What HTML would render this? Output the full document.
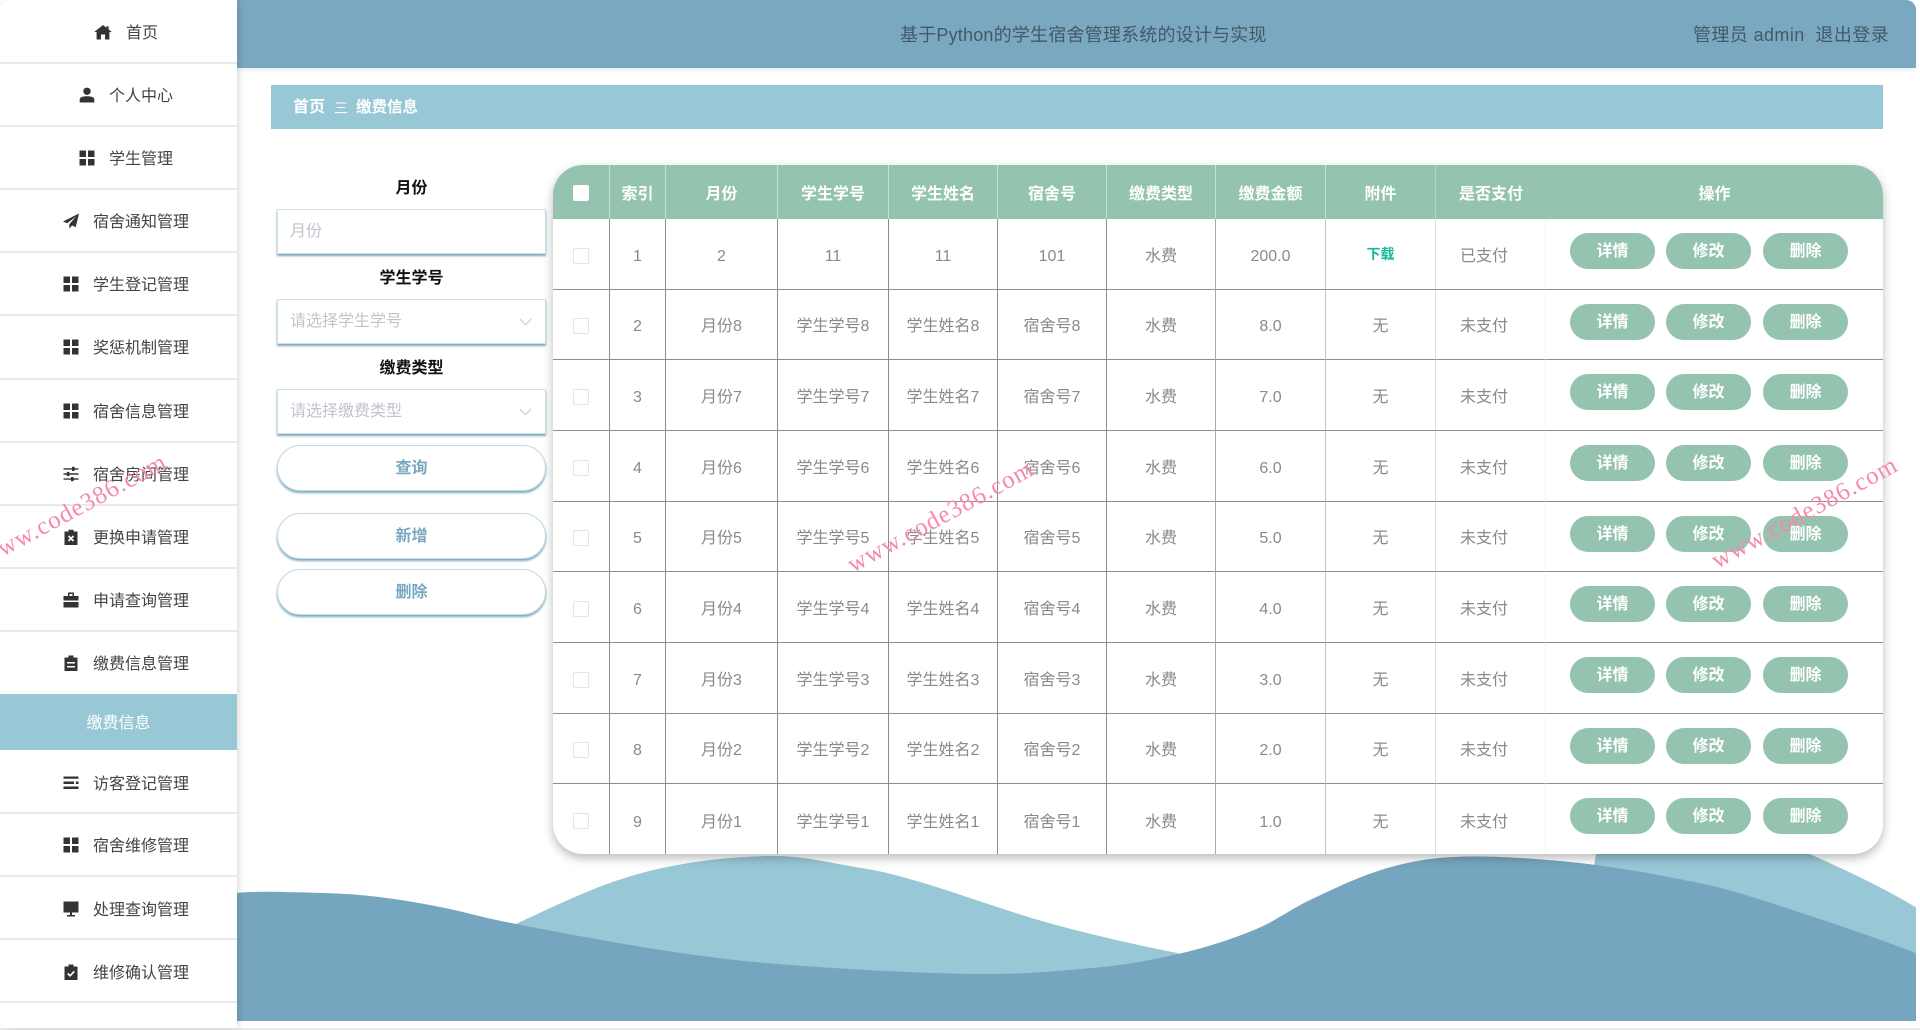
<!DOCTYPE html>
<html lang="zh">
<head>
<meta charset="utf-8">
<title>缴费信息</title>
<style>
html,body{margin:0;padding:0;width:1920px;height:1030px;overflow:hidden;background:#fff;font-family:"Liberation Sans","Noto Sans CJK SC",sans-serif}
#wrap{position:relative;width:1920px;height:1030px;overflow:hidden;background:#fff;filter:blur(.35px)}
.abs{position:absolute}
#botline{position:absolute;left:0;top:1028px;width:1920px;height:2px;background:#ececec}
#sidebar{position:absolute;left:0;top:0;width:237px;height:1028px;background:#fff;overflow:hidden;box-shadow:2px 0 7px rgba(0,0,0,.14);border-radius:10px 0 0 10px;z-index:5}
.it{position:absolute;left:0;width:252px;height:63px;display:flex;align-items:center;justify-content:center;color:#444;font-size:16px;line-height:63px;padding-top:3px;box-sizing:border-box}
.it svg{width:16px;height:16px;margin-right:14px;flex:none;position:relative;top:-1px}
.dv{position:absolute;left:0;width:237px;height:2px;background:#e9e9e9}
#active{position:absolute;left:0;top:694px;width:237px;height:56px;line-height:60px;text-align:center;background:#98c8d6;color:#fff;font-size:16px}
#header{position:absolute;left:237px;top:0;width:1679px;height:68px;background:#7aa8c0;border-radius:0 10px 0 0;box-shadow:0 2px 5px rgba(122,168,192,.2);color:#42596a;font-size:18px}
#title{position:absolute;left:663px;top:22px;line-height:27px;white-space:nowrap;letter-spacing:.2px}
#user{position:absolute;left:1456px;top:22px;line-height:27px;white-space:nowrap;letter-spacing:.4px}
#crumb{position:absolute;left:271px;top:85px;width:1612px;height:44px;background:#98c8d6;color:#fff;font-size:16px;line-height:46px}
#crumb span{position:absolute;top:0;white-space:nowrap}
.lb{position:absolute;left:277px;width:269px;text-align:center;font-size:16px;font-weight:700;color:#111;line-height:24px}
.ip{position:absolute;left:277px;width:269px;height:45px;box-sizing:border-box;background:#fff;border:1px solid #cfe0e8;box-shadow:0 2px 2px #7aa8c0;color:#c0c4cc;font-size:16px;line-height:44px;padding-left:12px}
.ip svg{position:absolute;right:13px;top:18px;width:13px;height:8px}
.fb{position:absolute;left:277px;width:269px;height:46px;box-sizing:border-box;border:1px solid #c6dbe4;border-radius:23px;background:#fff;box-shadow:0 2px 2px #7aa8c0;text-align:center;color:#78a7c0;font-size:16px;font-weight:700;line-height:46px}
#tb{position:absolute;left:553px;top:165px;width:1330px;height:689px;border-radius:30px;background:#fff;overflow:hidden;box-shadow:0 4px 10px rgba(0,0,0,.28)}
table{border-collapse:separate;border-spacing:0;table-layout:fixed;width:1330px;font-size:16px;color:#8a8a8a}
th{height:54px;padding:0;background:#94c3b0;color:#fff;font-weight:700;border-right:1px solid #c4e2d6;text-align:center;box-sizing:border-box}
th:nth-child(9){border-right-color:#b4d6c8}
th:nth-child(10),th:last-child{border-right:0}
td{height:70.67px;padding:6px 0 0;line-height:24px;text-align:center;border-bottom:1px solid #8c8c98;border-right:1px solid #8c8c98;box-sizing:border-box;position:relative}
tr:last-child td{border-bottom:0}
td:nth-child(7){border-right-color:#a8a8b4}
td:nth-child(8){border-right-color:#c4c4d0}
td:nth-child(9){border-right-color:#dcdce2}
td:nth-child(10){border-right-color:#f3f3f5;padding-right:13px}
td:last-child{border-right:0}
.cb{display:inline-block;width:16px;height:16px;box-sizing:border-box;border:1px solid #e4e4e4;border-radius:2px;background:#fff;vertical-align:middle;position:relative;top:-1px}
th .cb{border:0;top:1px}
.dl{color:#14b898;font-size:14px;font-weight:700;position:relative;top:-2px}
.b{position:absolute;top:14px;width:85px;height:36px;border-radius:18px;background:#94c3b0;color:#fff;font-weight:700;line-height:37px;text-align:center}
.b1{left:24px}.b2{left:120px}.b3{left:217px}
#wm{position:absolute;left:0;top:0;z-index:9;pointer-events:none}
#wm text{font-family:"Liberation Serif",serif;font-size:25px;letter-spacing:1px;fill:#f58aab}
</style>
</head>
<body>
<div id="wrap">
<svg class="abs" style="left:0;top:0" width="1920" height="1030" viewBox="0 0 1920 1030">
<defs><clipPath id="c"><rect x="237" y="800" width="1679" height="221"/></clipPath></defs>
<g clip-path="url(#c)">
<path fill="#98c8d6" d="M500 1000L500 940L516 924C531 917 579 894 607 884C635 874 655 869 683 864C711 859 746 856 774 856C802 856 826 862 850 866C874 870 887 872 920 882C953 891.5 1006 911 1049 923C1092 935 1150 948 1178 953L1178 1000Z"/>
<path fill="#98c8d6" d="M1580 950L1596 854L1810 854C1840 868 1880 885 1920 910L1920 1000Z"/>
<path fill="#76a6bf" d="M237 893C245 892 262 891.5 284 892S343 893 370 896S421 903 445 908S480 917 516 924S615 943 661 950S738 961 790 965S924 973.5 974 974S1058 971 1092 968S1151 960 1178 954C1205 948 1232 939 1254 930C1276 921 1290 909.5 1310 900C1330 890.5 1352 880 1372 873C1392 866 1409 862 1430 859C1451 856.3 1474 856 1500 857C1526 858 1559 860.5 1588 864S1649 873 1674 878S1716 886 1739 893S1784 907 1814 917S1905 948 1920 955L1920 1021L237 1021Z"/>
</g>
</svg>
<div id="botline"></div>

<div id="header">
<div id="title">基于Python的学生宿舍管理系统的设计与实现</div>
<div id="user">管理员 admin&nbsp;&nbsp;退出登录</div>
</div>

<div id="crumb">
<span style="left:22px;font-weight:700">首页</span>
<span style="left:63px;font-size:14px">三</span>
<span style="left:85px;font-weight:700;font-size:15.5px">缴费信息</span>
</div>

<div id="sidebar">
<div class="it" style="top:0"><svg viewBox="0 0 16 16" preserveAspectRatio="none" style="width:18px"><path fill="#333" d="M8 1L.2 8H2.3V15.5H6.2V10.5H9.8V15.5H13.7V8H15.8L13 5.5V2.2H11V3.7Z"/></svg>首页</div>
<div class="dv" style="top:62px"></div>
<div class="it" style="top:63px"><svg viewBox="0 0 16 16"><circle cx="8" cy="4.3" r="3.7" fill="#333"/><path fill="#333" d="M.7 15.5V12.6C.7 10.4 3 9.3 8 9.3S15.3 10.4 15.3 12.6V15.5Z"/></svg>个人中心</div>
<div class="dv" style="top:125px"></div>
<div class="it" style="top:126px"><svg viewBox="0 0 16 16"><path fill="#333" d="M.5.5h6.5v6.5H.5zM9 .5h6.5v6.5H9zM.5 9h6.5v6.5H.5zM9 9h6.5v6.5H9z"/></svg>学生管理</div>
<div class="dv" style="top:188px"></div>
<div class="it" style="top:189px"><svg viewBox="0 0 16 16"><path fill="#333" d="M16 .5L0 8.5l4.2 1.8L13 3.5 6.3 11.2v4.3l2.8-3 3.6 1.8z"/></svg>宿舍通知管理</div>
<div class="dv" style="top:251px"></div>
<div class="it" style="top:252px"><svg viewBox="0 0 16 16"><path fill="#333" d="M.5.5h6.5v6.5H.5zM9 .5h6.5v6.5H9zM.5 9h6.5v6.5H.5zM9 9h6.5v6.5H9z"/></svg>学生登记管理</div>
<div class="dv" style="top:314px"></div>
<div class="it" style="top:315px"><svg viewBox="0 0 16 16"><path fill="#333" d="M.5.5h6.5v6.5H.5zM9 .5h6.5v6.5H9zM.5 9h6.5v6.5H.5zM9 9h6.5v6.5H9z"/></svg>奖惩机制管理</div>
<div class="dv" style="top:378px"></div>
<div class="it" style="top:379px"><svg viewBox="0 0 16 16"><path fill="#333" d="M.5.5h6.5v6.5H.5zM9 .5h6.5v6.5H9zM.5 9h6.5v6.5H.5zM9 9h6.5v6.5H9z"/></svg>宿舍信息管理</div>
<div class="dv" style="top:441px"></div>
<div class="it" style="top:442px"><svg viewBox="0 0 16 16"><path fill="#333" d="M.5 2.2H15.5V3.6H.5zM.5 7.3H15.5V8.7H.5zM.5 12.4H15.5V13.8H.5z"/><rect x="9" y=".8" width="2.6" height="4.2" fill="#333"/><rect x="3.8" y="5.9" width="2.6" height="4.2" fill="#333"/><rect x="8" y="11" width="2.6" height="4.2" fill="#333"/></svg>宿舍房间管理</div>
<div class="dv" style="top:504px"></div>
<div class="it" style="top:505px"><svg viewBox="0 0 16 16"><path fill="#333" d="M1.5 2.5H5.5V.8H10.5V2.5H14.5V16H1.5z"/><path stroke="#fff" stroke-width="1.6" fill="none" d="M5.5 7l5 5M10.5 7l-5 5"/></svg>更换申请管理</div>
<div class="dv" style="top:567px"></div>
<div class="it" style="top:568px"><svg viewBox="0 0 16 16"><path fill="#333" d="M5 .5H11V4H15.5V8.5H.5V4H5ZM6.5 2V4H9.5V2ZM.5 10H15.5V15.5H.5Z"/></svg>申请查询管理</div>
<div class="dv" style="top:630px"></div>
<div class="it" style="top:631px"><svg viewBox="0 0 16 16"><path fill="#333" d="M1.5 2.5H5.5V.5H10.5V2.5H14.5V16H1.5z"/><path fill="#fff" d="M4 7H12V8.5H4zM4 11H12V12.5H4z"/></svg>缴费信息管理</div>
<div id="active">缴费信息</div>
<div class="it" style="top:751px"><svg viewBox="0 0 16 16"><path fill="#333" d="M.5 1.5H15.5V3.8H.5zM.5 6.5H11V9H.5zM.5 11.5H15.5V14H.5zM12.8 6.5H15.5V9H12.8z"/></svg>访客登记管理</div>
<div class="dv" style="top:812px"></div>
<div class="it" style="top:813px"><svg viewBox="0 0 16 16"><path fill="#333" d="M.5.5h6.5v6.5H.5zM9 .5h6.5v6.5H9zM.5 9h6.5v6.5H.5zM9 9h6.5v6.5H9z"/></svg>宿舍维修管理</div>
<div class="dv" style="top:875px"></div>
<div class="it" style="top:877px"><svg viewBox="0 0 16 16"><path fill="#333" d="M.5 .5H15.5V11.5H.5zM7 11.5H9V14H12V15.5H4V14H7z"/></svg>处理查询管理</div>
<div class="dv" style="top:938px"></div>
<div class="it" style="top:940px"><svg viewBox="0 0 16 16"><path fill="#333" d="M1.5 2.5H5.5V.5H10.5V2.5H14.5V16H1.5z"/><path stroke="#fff" stroke-width="1.7" fill="none" d="M4.7 9.5l2.4 2.3 4.2-4.5"/></svg>维修确认管理</div>
<div class="dv" style="top:1001px"></div>
</div>

<div class="lb" style="top:177px">月份</div>
<div class="ip" style="top:209px">月份</div>
<div class="lb" style="top:267px">学生学号</div>
<div class="ip" style="top:299px">请选择学生学号<svg viewBox="0 0 13 8"><path d="M.8 1l5.7 5.7L12.2 1" fill="none" stroke="#c0c4cc" stroke-width="1"/></svg></div>
<div class="lb" style="top:357px">缴费类型</div>
<div class="ip" style="top:389px">请选择缴费类型<svg viewBox="0 0 13 8"><path d="M.8 1l5.7 5.7L12.2 1" fill="none" stroke="#c0c4cc" stroke-width="1"/></svg></div>
<div class="fb" style="top:445px">查询</div>
<div class="fb" style="top:513px">新增</div>
<div class="fb" style="top:569px">删除</div>

<div id="tb">
<table>
<colgroup><col style="width:57px"><col style="width:56px"><col style="width:112px"><col style="width:111px"><col style="width:109px"><col style="width:109px"><col style="width:109px"><col style="width:110px"><col style="width:110px"><col style="width:110px"><col style="width:337px"></colgroup>
<thead><tr><th><span class="cb"></span></th><th>索引</th><th>月份</th><th>学生学号</th><th>学生姓名</th><th>宿舍号</th><th>缴费类型</th><th>缴费金额</th><th>附件</th><th>是否支付</th><th>操作</th></tr></thead>
<tbody>
<tr><td><span class="cb"></span></td><td>1</td><td>2</td><td>11</td><td>11</td><td>101</td><td>水费</td><td>200.0</td><td><span class="dl">下载</span></td><td>已支付</td><td><div class="b b1">详情</div><div class="b b2">修改</div><div class="b b3">删除</div></td></tr>
<tr><td><span class="cb"></span></td><td>2</td><td>月份8</td><td>学生学号8</td><td>学生姓名8</td><td>宿舍号8</td><td>水费</td><td>8.0</td><td>无</td><td>未支付</td><td><div class="b b1">详情</div><div class="b b2">修改</div><div class="b b3">删除</div></td></tr>
<tr><td><span class="cb"></span></td><td>3</td><td>月份7</td><td>学生学号7</td><td>学生姓名7</td><td>宿舍号7</td><td>水费</td><td>7.0</td><td>无</td><td>未支付</td><td><div class="b b1">详情</div><div class="b b2">修改</div><div class="b b3">删除</div></td></tr>
<tr><td><span class="cb"></span></td><td>4</td><td>月份6</td><td>学生学号6</td><td>学生姓名6</td><td>宿舍号6</td><td>水费</td><td>6.0</td><td>无</td><td>未支付</td><td><div class="b b1">详情</div><div class="b b2">修改</div><div class="b b3">删除</div></td></tr>
<tr><td><span class="cb"></span></td><td>5</td><td>月份5</td><td>学生学号5</td><td>学生姓名5</td><td>宿舍号5</td><td>水费</td><td>5.0</td><td>无</td><td>未支付</td><td><div class="b b1">详情</div><div class="b b2">修改</div><div class="b b3">删除</div></td></tr>
<tr><td><span class="cb"></span></td><td>6</td><td>月份4</td><td>学生学号4</td><td>学生姓名4</td><td>宿舍号4</td><td>水费</td><td>4.0</td><td>无</td><td>未支付</td><td><div class="b b1">详情</div><div class="b b2">修改</div><div class="b b3">删除</div></td></tr>
<tr><td><span class="cb"></span></td><td>7</td><td>月份3</td><td>学生学号3</td><td>学生姓名3</td><td>宿舍号3</td><td>水费</td><td>3.0</td><td>无</td><td>未支付</td><td><div class="b b1">详情</div><div class="b b2">修改</div><div class="b b3">删除</div></td></tr>
<tr><td><span class="cb"></span></td><td>8</td><td>月份2</td><td>学生学号2</td><td>学生姓名2</td><td>宿舍号2</td><td>水费</td><td>2.0</td><td>无</td><td>未支付</td><td><div class="b b1">详情</div><div class="b b2">修改</div><div class="b b3">删除</div></td></tr>
<tr><td><span class="cb"></span></td><td>9</td><td>月份1</td><td>学生学号1</td><td>学生姓名1</td><td>宿舍号1</td><td>水费</td><td>1.0</td><td>无</td><td>未支付</td><td><div class="b b1">详情</div><div class="b b2">修改</div><div class="b b3">删除</div></td></tr>
</tbody>
</table>
</div>

<svg id="wm" width="1920" height="1030" viewBox="0 0 1920 1030">
<text transform="translate(-14 566) rotate(-28.5)">www.code386.com</text>
<text transform="translate(853 573) rotate(-28.5)">www.code386.com</text>
<text transform="translate(1717 569) rotate(-28.5)">www.code386.com</text>
</svg>
</div>
</body>
</html>
